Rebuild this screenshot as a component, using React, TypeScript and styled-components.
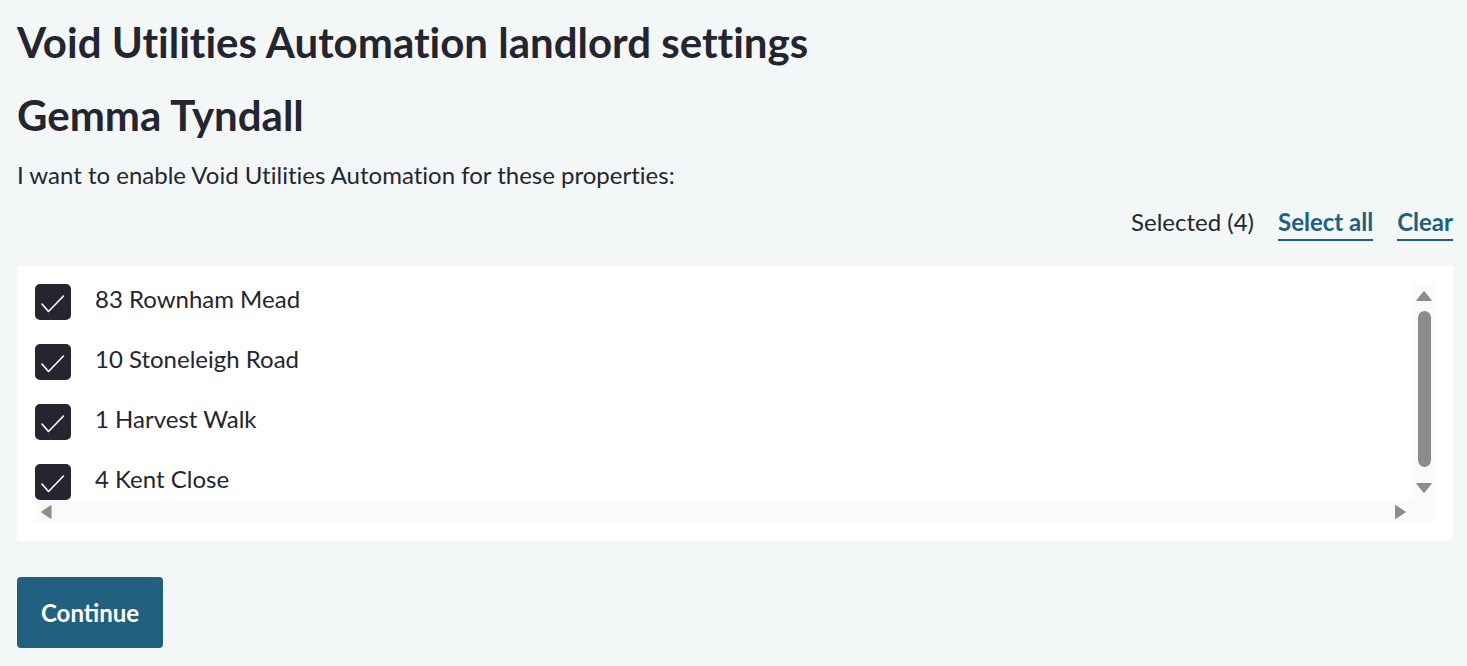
import React, { useState } from 'react'
import styled, { createGlobalStyle } from 'styled-components'

const GlobalStyle = createGlobalStyle`
  html, body {
    margin: 0;
    padding: 0;
    background: #f4f7f8;
  }
  body {
    font-family: Lato, "Open Sans", sans-serif;
    font-variant-ligatures: no-common-ligatures;
    color: #25252f;
  }
`

const Page = styled.main`
  padding: 20px 14px 20px 17px;
`

const Title = styled.h1`
  font-size: 42px;
  line-height: 44px;
  font-weight: 700;
  margin: 0 0 29px 0;
`

const Name = styled.h2`
  font-size: 42px;
  line-height: 44px;
  font-weight: 700;
  margin: 0 0 22px 0;
`

const Intro = styled.p`
  font-size: 24px;
  line-height: 32px;
  margin: 0 0 16px 0;
`

const SelectionBar = styled.div`
  display: flex;
  justify-content: flex-end;
  align-items: flex-start;
  gap: 24px;
  font-size: 24px;
  line-height: 30px;
  margin-bottom: 25px;
`

const Count = styled.span`
  color: #25252f;
`

const TextLink = styled.button`
  background: none;
  border: none;
  padding: 0 0 2px 0;
  font: inherit;
  font-weight: 700;
  color: #1f5f80;
  border-bottom: 2px solid #1f5f80;
  cursor: pointer;
`

const Panel = styled.div`
  background: #ffffff;
  padding: 18px 18px 19px 18px;
`

const barGrey = '#8c8c8c'
const barTrack = '#fafafa'

const ScrollFrame = styled.div`
  display: grid;
  grid-template-columns: 1fr 22px;
  grid-template-rows: 216px 22px;
`

const Viewport = styled.div`
  overflow: hidden;
`

const VBar = styled.div`
  background: ${barTrack};
  display: flex;
  flex-direction: column;
`

const HBar = styled.div`
  background: ${barTrack};
  display: flex;
  justify-content: space-between;
`

const Corner = styled.div`
  background: ${barTrack};
`

const BarTrack = styled.div`
  flex: 1;
  display: flex;
  flex-direction: column;
  padding: 5px 4.5px 11px 4.5px;
`

const Thumb = styled.div`
  flex: 1;
  background: ${barGrey};
  border-radius: 7px;
`

const ArrowSvg = styled.svg`
  flex: 0 0 22px;
  width: 22px;
  height: 22px;
  display: block;
`

const Arrow = ({ points }: { points: string }) => (
  <ArrowSvg viewBox="0 0 22 22">
    <polygon points={points} fill={barGrey} stroke={barGrey} strokeWidth="1" strokeLinejoin="round" />
  </ArrowSvg>
)

const List = styled.ul`
  list-style: none;
  margin: 0;
  padding: 0 0 8px 0;
  display: flex;
  flex-direction: column;
  gap: 24px;
`

const Item = styled.li`
  display: flex;
  align-items: center;
  gap: 24px;
  height: 36px;
  font-size: 24px;
  cursor: pointer;
`

const Label = styled.span`
  margin-bottom: 7px;
`

const Box = styled.span<{ $checked: boolean }>`
  flex: 0 0 36px;
  width: 36px;
  height: 36px;
  border-radius: 5px;
  box-sizing: border-box;
  background: ${p => (p.$checked ? '#262631' : '#ffffff')};
  border: 2px solid #262631;
  display: flex;
`

const CheckMark = styled.svg`
  width: 36px;
  height: 36px;
  margin: -2px;
`

const Actions = styled.div`
  margin-top: 36px;
`

const PrimaryButton = styled.button`
  background: #21607f;
  color: #ffffff;
  border: none;
  border-radius: 4px;
  height: 71px;
  padding: 0 24px;
  font-family: Lato, "Open Sans", sans-serif;
  font-weight: 700;
  font-size: 24px;
  cursor: pointer;
`

const properties = ['83 Rownham Mead', '10 Stoneleigh Road', '1 Harvest Walk', '4 Kent Close']

const App = () => {
  const [selected, setSelected] = useState<string[]>(properties)

  const toggle = (p: string) => {
    setSelected(s => (s.includes(p) ? s.filter(x => x !== p) : [...s, p]))
  }

  return (
    <>
      <GlobalStyle />
      <Page>
        <Title>Void Utilities Automation landlord settings</Title>
        <Name>Gemma Tyndall</Name>
        <Intro>I want to enable Void Utilities Automation for these properties:</Intro>
        <SelectionBar>
          <Count>Selected ({selected.length})</Count>
          <TextLink onClick={() => setSelected(properties)}>Select all</TextLink>
          <TextLink onClick={() => setSelected([])}>Clear</TextLink>
        </SelectionBar>
        <Panel>
          <ScrollFrame>
            <Viewport>
              <List>
                {properties.map(p => {
                  const checked = selected.includes(p)
                  return (
                    <Item key={p} onClick={() => toggle(p)}>
                      <Box $checked={checked}>
                        {checked && (
                          <CheckMark viewBox="0 0 36 36">
                            <polyline
                              points="7,20 13.5,27.5 28.5,12"
                              fill="none"
                              stroke="#ffffff"
                              strokeWidth="1.6"
                              strokeLinecap="round"
                              strokeLinejoin="round"
                            />
                          </CheckMark>
                        )}
                      </Box>
                      <Label>{p}</Label>
                    </Item>
                  )
                })}
              </List>
            </Viewport>
            <VBar>
              <Arrow points="3.5,16.5 11,7.5 18.5,16.5" />
              <BarTrack>
                <Thumb />
              </BarTrack>
              <Arrow points="3.5,5.5 18.5,5.5 11,14.5" />
            </VBar>
            <HBar>
              <Arrow points="6.5,12 16,5.5 16,18.5" />
              <Arrow points="4.5,5.5 14.5,12 4.5,18.5" />
            </HBar>
            <Corner />
          </ScrollFrame>
        </Panel>
        <Actions>
          <PrimaryButton>Continue</PrimaryButton>
        </Actions>
      </Page>
    </>
  )
}

export default App
